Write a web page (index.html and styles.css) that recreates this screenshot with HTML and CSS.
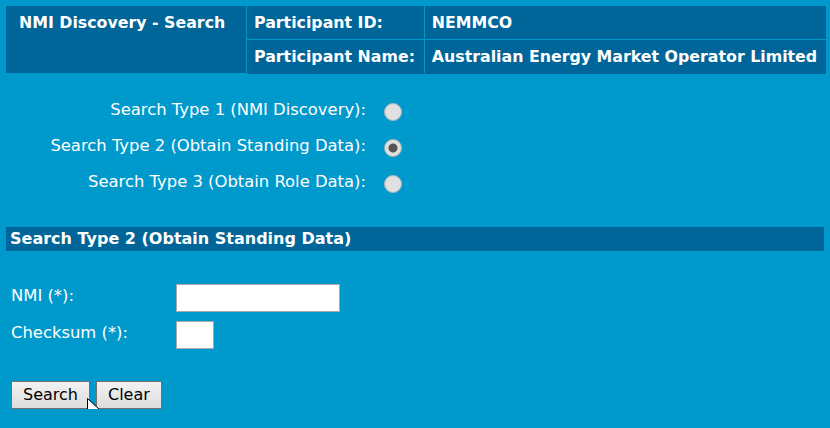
FILE: index.html
```html
<!doctype html>
<html lang="en">
<head>
    <meta charset="UTF-8">
    <link rel="stylesheet" href="styles.css">
    <title>NMI Discovery - Search</title>
</head>
<body>
<div class="page">

    <table class="header">
        <tbody>
        <tr>
            <td class="title" rowspan="2">NMI Discovery - Search</td>
            <td class="label">Participant ID:</td>
            <td class="value">NEMMCO</td>
        </tr>
        <tr>
            <td class="label">Participant Name:</td>
            <td class="value">Australian Energy Market Operator Limited</td>
        </tr>
        </tbody>
    </table>

    <div class="types">
        <label class="type-label" for="t1">Search Type 1 (NMI Discovery):</label>
        <input class="radio" id="t1" type="radio" name="type">
        <label class="type-label" for="t2">Search Type 2 (Obtain Standing Data):</label>
        <input class="radio" id="t2" type="radio" name="type" checked>
        <label class="type-label" for="t3">Search Type 3 (Obtain Role Data):</label>
        <input class="radio" id="t3" type="radio" name="type">
    </div>

    <div class="section-bar">Search Type 2 (Obtain Standing Data)</div>

    <div class="fields">
        <label class="field-label" for="nmi">NMI (*):</label>
        <input class="text nmi" id="nmi" type="text">
        <label class="field-label" for="checksum">Checksum (*):</label>
        <input class="text checksum" id="checksum" type="text">
    </div>

    <div class="buttons">
        <button class="btn">Search</button>
        <button class="btn">Clear</button>
        <svg class="cursor" width="13" height="21" viewBox="0 0 13 21">
            <path d="M0.5 0.5 L0.5 16.5 L4.5 12.5 L7.5 19.5 L10 18.5 L7 11.5 L12.5 11.5 Z" fill="#fff" stroke="#000" stroke-width="1"/>
        </svg>
    </div>

</div>
</body>
</html>
```

FILE: styles.css
```css
html, body {
    margin: 0;
    padding: 0;
    background: #0099cc;
}

body {
    font-family: "DejaVu Sans", Verdana, sans-serif;
    font-size: 16.4px;
    color: #fff;
}

.page {
    padding: 6px 0 0 6px;
}

table.header {
    border-collapse: collapse;
    background: #006699;
    width: 820px;
}

table.header td {
    border: 1px solid #0099cc;
    font-weight: bold;
    font-size: 15.8px;
    height: 33px;
    padding: 0 7px;
    vertical-align: middle;
    white-space: nowrap;
}

table.header td.title {
    vertical-align: top;
    padding: 7px 13px 0 13px;
    width: 214px;
    border-left: none;
    border-top: none;
}

table.header td.label {
    padding-right: 8px;
}

table.header tr:first-child td {
    border-top: none;
}

table.header td.value {
    border-right: none;
}

table.header tr:last-child td {
    border-bottom: none;
}

.types {
    display: grid;
    grid-template-columns: 360px 30px;
    column-gap: 18px;
    row-gap: 16px;
    align-items: center;
    margin-top: 26px;
}

.type-label {
    text-align: right;
    line-height: 20px;
}

.radio {
    appearance: none;
    width: 18px;
    height: 18px;
    margin: 0;
    border-radius: 50%;
    border: 1px solid #b4b4b4;
    background: #e0e0e0;
    box-sizing: border-box;
    position: relative;
    top: 2px;
}

.radio:checked {
    background: radial-gradient(circle, #555 0 4px, #e0e0e0 5px);
}

.section-bar {
    margin-top: 35px;
    width: 814px;
    background: #006699;
    font-weight: bold;
    font-size: 16px;
    padding: 4px 0 4px 4px;
    line-height: 16px;
}

.fields {
    display: grid;
    grid-template-columns: 165px auto;
    row-gap: 9px;
    align-items: center;
    justify-items: start;
    margin-top: 33px;
    padding-left: 5px;
}

.field-label {
    line-height: 19px;
    margin-top: -4px;
}

.text {
    box-sizing: border-box;
    height: 28px;
    border: 1px solid #a9a9a9;
    background: #fff;
    margin: 0;
}

.nmi {
    width: 164px;
}

.checksum {
    width: 38px;
}

.buttons {
    display: flex;
    gap: 6px;
    margin-top: 32px;
    padding-left: 5px;
    position: relative;
}

.btn {
    font-family: "DejaVu Sans", Verdana, sans-serif;
    font-size: 16px;
    color: #000;
    height: 28px;
    padding: 0 11px;
    border: 1px solid #707070;
    background: linear-gradient(#f2f2f2, #dddddd);
    border-radius: 0;
}

.cursor {
    position: absolute;
    left: 81px;
    top: 17px;
}
```
